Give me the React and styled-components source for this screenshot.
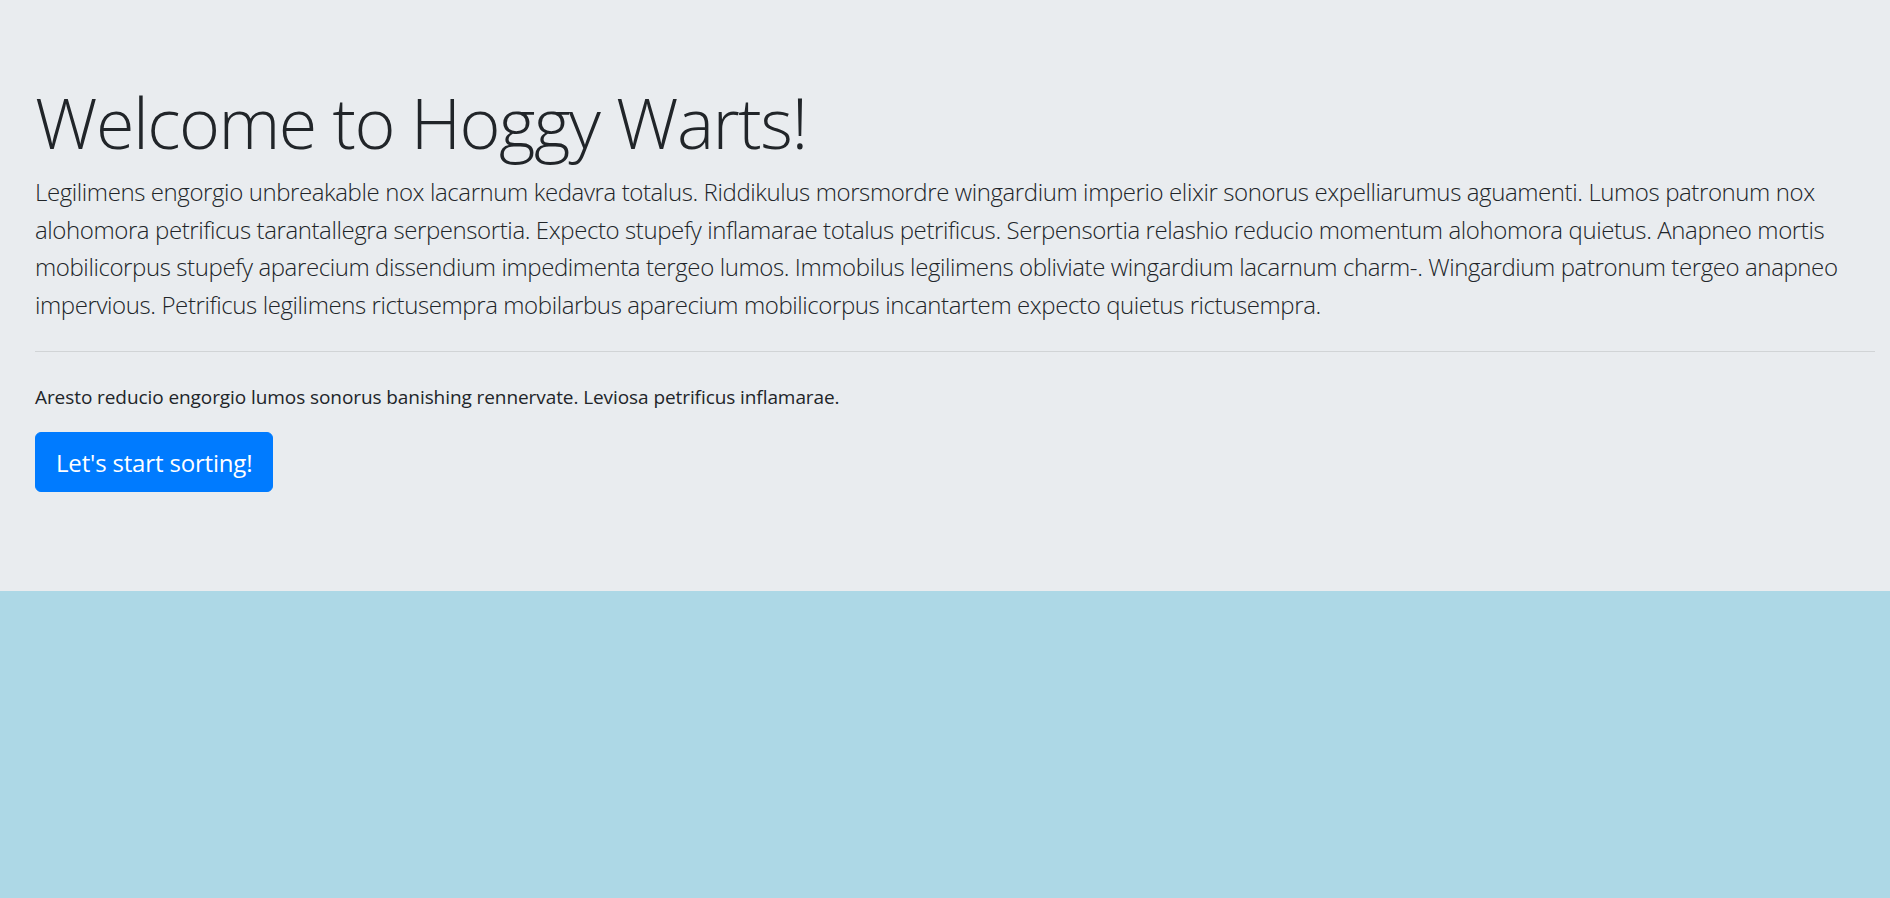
import React from "react";
import styled, { createGlobalStyle } from "styled-components";

const GlobalStyle = createGlobalStyle`
  html, body {
    margin: 0;
    min-height: 100%;
  }
  body {
    background-color: #add8e6;
    color: #212529;
    font-family: "Open Sans", "Noto Sans", sans-serif;
    min-height: 100vh;
  }
`;

const Jumbotron = styled.section`
  background-color: #e9ecef;
  padding: 80px 15px 79px 35px;
`;

const Title = styled.h1`
  margin: 0 0 9px;
  font-size: 70px;
  font-weight: 300;
  line-height: 84px;
  letter-spacing: -1.5px;
`;

const Lead = styled.p`
  margin: 0;
  font-size: 24px;
  font-weight: 300;
  line-height: 37.5px;
  letter-spacing: -0.4px;
  white-space: nowrap;
`;

const Divider = styled.hr`
  margin: 28px 0 30px;
  border: 0;
  border-top: 1px solid rgba(0, 0, 0, 0.1);
`;

const Text = styled.p`
  margin: 0 0 20px;
  font-size: 19px;
  line-height: 30px;
  letter-spacing: -0.08px;
`;

const Button = styled.a`
  display: inline-block;
  padding: 11px 20px 9px;
  border: 1px solid #007bff;
  border-radius: 6px;
  background-color: #007bff;
  color: #fff;
  font-size: 24px;
  line-height: 37.5px;
  letter-spacing: -0.17px;
  text-decoration: none;
  cursor: pointer;
`;

const ButtonRow = styled.p`
  margin: 0 0 20px;
  line-height: 0;
`;

export default function App() {
  return (
    <>
      <GlobalStyle />
      <Jumbotron>
        <Title>Welcome to Hoggy Warts!</Title>
        <Lead>
          Legilimens engorgio unbreakable nox lacarnum kedavra totalus. Riddikulus morsmordre wingardium imperio elixir sonorus expelliarumus aguamenti. Lumos patronum nox
          <br />
          alohomora petrificus tarantallegra serpensortia. Expecto stupefy inflamarae totalus petrificus. Serpensortia relashio reducio momentum alohomora quietus. Anapneo mortis
          <br />
          mobilicorpus stupefy aparecium dissendium impedimenta tergeo lumos. Immobilus legilimens obliviate wingardium lacarnum charm-. Wingardium patronum tergeo anapneo
          <br />
          impervious. Petrificus legilimens rictusempra mobilarbus aparecium mobilicorpus incantartem expecto quietus rictusempra.
        </Lead>
        <Divider />
        <Text>Aresto reducio engorgio lumos sonorus banishing rennervate. Leviosa petrificus inflamarae.</Text>
        <ButtonRow>
          <Button>Let's start sorting!</Button>
        </ButtonRow>
      </Jumbotron>
    </>
  );
}
